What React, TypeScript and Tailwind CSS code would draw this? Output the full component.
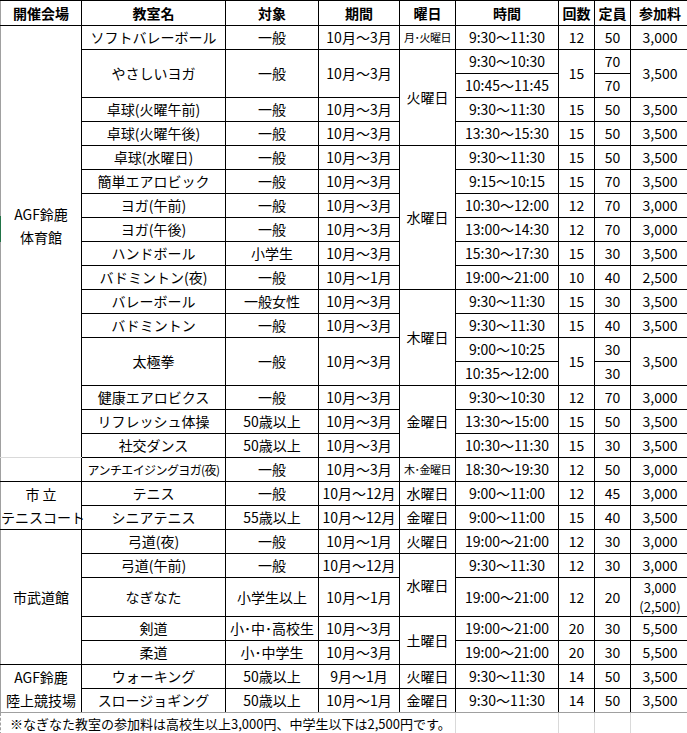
import React from 'react';

type CellProps = React.TdHTMLAttributes<HTMLTableCellElement>;

const C = ({ children, className = '', ...rest }: CellProps) => (
  <td
    className={`border border-black p-0 text-center align-middle whitespace-nowrap ${className}`}
    {...rest}
  >
    {children}
  </td>
);

const H = ({ children, className = '' }: { children: React.ReactNode; className?: string }) => (
  <th className={`border border-black p-0 text-center align-middle font-bold whitespace-nowrap ${className}`}>
    {children}
  </th>
);

const venueCls = 'border-l-[#a0a0a0] leading-[23px]';
const last = 'border-b-[#a0a0a0] border-b-dashed';

type RowProps = {
  lead?: React.ReactNode;
  name: React.ReactNode;
  target: string;
  period: string;
  day?: React.ReactNode;
  time: string;
  count: string;
  cap: string;
  fee: React.ReactNode;
  h?: string;
  end?: boolean;
};

function Row({ lead, name, target, period, day, time, count, cap, fee, h = 'h-[24px]', end }: RowProps) {
  const b = end ? last : '';
  return (
    <tr className={h}>
      {lead}
      <C className={b}>{name}</C>
      <C className={b}>{target}</C>
      <C className={b}>{period}</C>
      {day}
      <C className={b}>{time}</C>
      <C className={b}>{count}</C>
      <C className={b}>{cap}</C>
      <C className={b}>{fee}</C>
    </tr>
  );
}

export default function App() {
  return (
    <div className="relative w-[687px] overflow-hidden bg-white text-black text-[14px] font-['Noto_Sans_CJK_JP',sans-serif]">
      <table className="table-fixed border-collapse w-[689px]">
        <colgroup>
          <col className="w-[81px]" />
          <col className="w-[144px]" />
          <col className="w-[93px]" />
          <col className="w-[81px]" />
          <col className="w-[56px]" />
          <col className="w-[103px]" />
          <col className="w-[36px]" />
          <col className="w-[36px]" />
          <col className="w-[59px]" />
        </colgroup>
        <thead>
          <tr className="h-[25px]">
            <H className="border-l-[#a0a0a0]">開催会場</H>
            <H>教室名</H>
            <H>対象</H>
            <H>期間</H>
            <H>曜日</H>
            <H>時間</H>
            <H>回数</H>
            <H>定員</H>
            <H>参加料</H>
          </tr>
        </thead>
        <tbody>
          <Row
            lead={
              <C rowSpan={18} className={`${venueCls} border-b-[#d9d9d9] pb-8`}>
                AGF鈴鹿
                <br />
                体育館
              </C>
            }
            name="ソフトバレーボール"
            target="一般"
            period="10月〜3月"
            day={<C className="text-[11px] tracking-[-0.5px]">月･火曜日</C>}
            time="9:30〜11:30"
            count="12"
            cap="50"
            fee="3,000"
          />
          <tr className="h-[24px]">
            <C rowSpan={2}>やさしいヨガ</C>
            <C rowSpan={2}>一般</C>
            <C rowSpan={2}>10月〜3月</C>
            <C rowSpan={4}>火曜日</C>
            <C>9:30〜10:30</C>
            <C rowSpan={2}>15</C>
            <C>70</C>
            <C rowSpan={2}>3,500</C>
          </tr>
          <tr className="h-[24px]">
            <C>10:45〜11:45</C>
            <C>70</C>
          </tr>
          <Row name="卓球(火曜午前)" target="一般" period="10月〜3月" time="9:30〜11:30" count="15" cap="50" fee="3,500" />
          <Row name="卓球(火曜午後)" target="一般" period="10月〜3月" time="13:30〜15:30" count="15" cap="50" fee="3,500" />
          <Row
            name="卓球(水曜日)"
            target="一般"
            period="10月〜3月"
            day={<C rowSpan={6}>水曜日</C>}
            time="9:30〜11:30"
            count="15"
            cap="50"
            fee="3,500"
          />
          <Row name="簡単エアロビック" target="一般" period="10月〜3月" time="9:15〜10:15" count="15" cap="70" fee="3,500" />
          <Row name="ヨガ(午前)" target="一般" period="10月〜3月" time="10:30〜12:00" count="12" cap="70" fee="3,000" />
          <Row name="ヨガ(午後)" target="一般" period="10月〜3月" time="13:00〜14:30" count="12" cap="70" fee="3,000" />
          <Row name="ハンドボール" target="小学生" period="10月〜3月" time="15:30〜17:30" count="15" cap="30" fee="3,500" />
          <Row name="バドミントン(夜)" target="一般" period="10月〜1月" time="19:00〜21:00" count="10" cap="40" fee="2,500" />
          <Row
            name="バレーボール"
            target="一般女性"
            period="10月〜3月"
            day={<C rowSpan={4}>木曜日</C>}
            time="9:30〜11:30"
            count="15"
            cap="30"
            fee="3,500"
          />
          <Row name="バドミントン" target="一般" period="10月〜3月" time="9:30〜11:30" count="15" cap="40" fee="3,500" />
          <tr className="h-[24px]">
            <C rowSpan={2}>太極拳</C>
            <C rowSpan={2}>一般</C>
            <C rowSpan={2}>10月〜3月</C>
            <C>9:00〜10:25</C>
            <C rowSpan={2}>15</C>
            <C>30</C>
            <C rowSpan={2}>3,500</C>
          </tr>
          <tr className="h-[24px]">
            <C>10:35〜12:00</C>
            <C>30</C>
          </tr>
          <Row
            name="健康エアロビクス"
            target="一般"
            period="10月〜3月"
            day={<C rowSpan={3}>金曜日</C>}
            time="9:30〜10:30"
            count="12"
            cap="70"
            fee="3,000"
          />
          <Row name="リフレッシュ体操" target="50歳以上" period="10月〜3月" time="13:30〜15:00" count="15" cap="50" fee="3,500" />
          <Row name="社交ダンス" target="50歳以上" period="10月〜3月" time="10:30〜11:30" count="15" cap="30" fee="3,500" />
          <Row
            lead={<C className={`${venueCls} border-t-[#d9d9d9]`} />}
            name={<span className="text-[12px] tracking-[-0.6px]">アンチエイジングヨガ(夜)</span>}
            target="一般"
            period="10月〜3月"
            day={<C className="text-[11px] tracking-[-0.5px]">木･金曜日</C>}
            time="18:30〜19:30"
            count="12"
            cap="50"
            fee="3,000"
          />
          <Row
            lead={
              <C rowSpan={2} className={venueCls}>
                市 立
                <br />
                テニスコート
              </C>
            }
            name="テニス"
            target="一般"
            period="10月〜12月"
            day={<C>水曜日</C>}
            time="9:00〜11:00"
            count="12"
            cap="45"
            fee="3,000"
          />
          <Row
            name="シニアテニス"
            target="55歳以上"
            period="10月〜12月"
            day={<C>金曜日</C>}
            time="9:00〜11:00"
            count="15"
            cap="40"
            fee="3,500"
          />
          <Row
            lead={
              <C rowSpan={5} className={venueCls}>
                市武道館
              </C>
            }
            name="弓道(夜)"
            target="一般"
            period="10月〜1月"
            day={<C>火曜日</C>}
            time="19:00〜21:00"
            count="12"
            cap="30"
            fee="3,000"
          />
          <Row
            name="弓道(午前)"
            target="一般"
            period="10月〜12月"
            day={<C rowSpan={2}>水曜日</C>}
            time="9:30〜11:30"
            count="12"
            cap="30"
            fee="3,000"
          />
          <Row
            h="h-[39px]"
            name="なぎなた"
            target="小学生以上"
            period="10月〜1月"
            time="19:00〜21:00"
            count="12"
            cap="20"
            fee={
              <span className="flex flex-col items-center text-[13px]">
                <span className="leading-[19px]">3,000</span>
                <span className="leading-[19px]">(2,500)</span>
              </span>
            }
          />
          <Row
            name="剣道"
            target="小･中･高校生"
            period="10月〜3月"
            day={<C rowSpan={2}>土曜日</C>}
            time="19:00〜21:00"
            count="20"
            cap="30"
            fee="5,500"
          />
          <Row name="柔道" target="小･中学生" period="10月〜3月" time="19:00〜21:00" count="20" cap="30" fee="5,500" />
          <Row
            lead={
              <C rowSpan={2} className={`${venueCls} ${last}`}>
                AGF鈴鹿
                <br />
                陸上競技場
              </C>
            }
            name="ウォーキング"
            target="50歳以上"
            period="9月〜1月"
            day={<C>火曜日</C>}
            time="9:30〜11:30"
            count="14"
            cap="50"
            fee="3,500"
          />
          <Row
            end
            name="スロージョギング"
            target="50歳以上"
            period="10月〜1月"
            day={<C className={last}>金曜日</C>}
            time="9:30〜11:30"
            count="14"
            cap="50"
            fee="3,500"
          />
          <tr className="h-[22px]">
            <td
              colSpan={5}
              className="border-t border-dashed border-t-[#a0a0a0] border-l border-l-[#a0a0a0] pl-[9px] text-left text-[13px] leading-[16px] whitespace-nowrap align-middle"
            >
              ※なぎなた教室の参加料は高校生以上3,000円、中学生以下は2,500円です。
            </td>
            <td className="border-t border-dashed border-t-[#a0a0a0] border-l border-solid border-l-[#d9d9d9]" />
            <td className="border-t border-dashed border-t-[#a0a0a0] border-l border-solid border-l-[#d9d9d9]" />
            <td className="border-t border-dashed border-t-[#a0a0a0] border-l border-solid border-l-[#d9d9d9]" />
            <td className="border-t border-dashed border-t-[#a0a0a0] border-l border-solid border-l-[#d9d9d9]" />
          </tr>
        </tbody>
      </table>
      <div className="absolute left-0 top-[216px] h-[26px] w-px bg-[#217346]" />
    </div>
  );
}
